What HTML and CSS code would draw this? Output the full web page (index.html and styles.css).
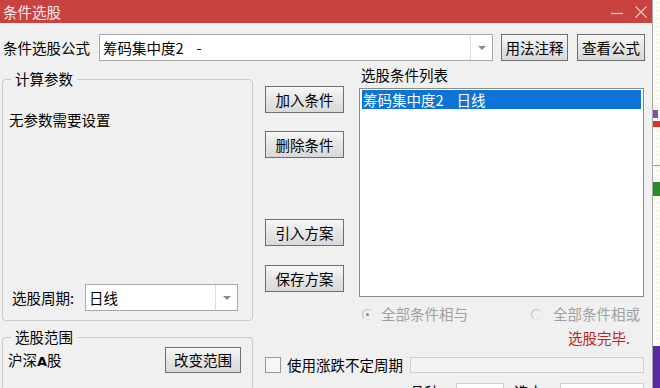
FILE: index.html
```html
<!DOCTYPE html>
<html lang="zh-CN">
<head>
<meta charset="utf-8">
<title>条件选股</title>
<link rel="stylesheet" href="styles.css">
</head>
<body>
<div class="screen">
  <div class="dialog">
    <div class="titlebar">
      <span class="title">条件选股</span>
      <svg class="tb-icon tb-min" width="14" height="14" viewBox="0 0 14 14"><path d="M1 7.5H13" stroke="#f2c4c2" stroke-width="1.3"/></svg>
      <svg class="tb-icon tb-close" width="14" height="14" viewBox="0 0 14 14"><path d="M1.5 1.5L12.5 12.5M12.5 1.5L1.5 12.5" stroke="#f2c4c2" stroke-width="1.3"/></svg>
    </div>

    <div class="formula-row">
      <span class="formula-label">条件选股公式</span>
      <div class="combo combo-formula">
        <span class="combo-text">筹码集中度2&nbsp;&nbsp;&nbsp; -</span>
        <span class="combo-arrow"><i class="tri"></i></span>
      </div>
      <button class="btn btn-usage">用法注释</button>
      <button class="btn btn-view">查看公式</button>
    </div>

    <div class="main">
      <div class="left">
        <fieldset class="group group-params">
          <legend>计算参数</legend>
          <div class="params-inner">
            <div class="no-params">无参数需要设置</div>
            <div class="period-row">
              <span class="period-label">选股周期:</span>
              <div class="combo combo-period">
                <span class="combo-text">日线</span>
                <span class="combo-arrow"><i class="tri"></i></span>
              </div>
            </div>
          </div>
        </fieldset>
        <fieldset class="group group-range">
          <legend>选股范围</legend>
          <div class="range-inner">
            <span class="range-name">沪深<b>A</b>股</span>
            <button class="btn btn-range">改变范围</button>
          </div>
        </fieldset>
      </div>

      <div class="right">
        <div class="rc-top">
          <div class="btncol">
            <button class="btn btn-side">加入条件</button>
            <button class="btn btn-side b2">删除条件</button>
            <button class="btn btn-side b3">引入方案</button>
            <button class="btn btn-side b4">保存方案</button>
          </div>
          <div class="listcol">
            <div class="list-label">选股条件列表</div>
            <div class="list">
              <div class="list-sel">筹码集中度2&nbsp;&nbsp;&nbsp; 日线</div>
            </div>
            <div class="radios">
              <span class="radio-item"><i class="radio checked"></i>全部条件相与</span>
              <span class="radio-item r2"><i class="radio"></i>全部条件相或</span>
            </div>
            <div class="done">选股完毕.</div>
          </div>
        </div>
        <div class="check-row">
          <i class="checkbox"></i>
          <span class="check-label">使用涨跌不定周期</span>
          <span class="field field-period"></span>
        </div>
        <div class="count-row">
          <span class="count-label">品种数</span>
          <span class="field field-count1"></span>
          <span class="count-label c2">选中数</span>
          <span class="field field-count2"></span>
        </div>
      </div>
    </div>
  </div>

  <div class="chart">
    <span class="mk mk-purple"></span>
    <span class="mk mk-red"></span>
    <span class="mk mk-hline"></span>
    <span class="mk mk-green"></span>
    <span class="mk mk-purple2"></span>
  </div>
</div>
</body>
</html>
```

FILE: styles.css
```css
* { box-sizing: border-box; }
html, body { margin: 0; padding: 0; }
body {
  width: 660px;
  height: 388px;
  overflow: hidden;
  font-family: "Noto Sans CJK SC", "Noto Sans", sans-serif;
  font-size: 14.5px;
  line-height: 18px;
  color: #000;
  background: #fbfbf4;
}
button { font: inherit; color: inherit; padding: 0; }

.screen { display: flex; height: 388px; }

.dialog {
  width: 653px;
  flex: none;
  background: #f0f0f0;
  border-right: 1px solid #a8a8a8;
  display: flex;
  flex-direction: column;
  overflow: hidden;
}

/* title bar */
.titlebar {
  height: 23px;
  flex: none;
  background: #c8433f;
  display: flex;
  align-items: center;
  padding-left: 3px;
  color: #fff;
}
.title { flex: 1; font-size: 14.5px; color: #fbeaea; }
.tb-icon { display: block; }
.tb-min { margin-right: 10px; margin-top: 2px; }
.tb-close { margin-right: 4px; }

/* formula row */
.formula-row {
  margin-top: 11px;
  height: 27px;
  flex: none;
  display: flex;
  align-items: center;
  padding-left: 3px;
}
.formula-label { width: 96px; }
.combo {
  height: 27px;
  background: #fff;
  border: 1px solid #a9a9a9;
  display: flex;
  align-items: stretch;
}
.combo-text { flex: 1; padding-left: 3px; display: flex; align-items: center; white-space: nowrap; }
.combo-arrow {
  width: 22px;
  border-left: 1px solid #dcdcdc;
  display: flex;
  align-items: center;
  justify-content: center;
}
.tri {
  width: 0; height: 0;
  border-left: 4px solid transparent;
  border-right: 4px solid transparent;
  border-top: 4px solid #8a8a8a;
}
.combo-formula { width: 394px; }

.btn {
  height: 27px;
  border: 1px solid #6f6f6f;
  background: linear-gradient(#f7f7f7, #e4e4e4 55%, #d9d9d9);
  display: flex;
  align-items: center;
  justify-content: center;
  white-space: nowrap;
}
.btn-usage { width: 67px; margin-left: 8px; }
.btn-view { width: 68px; margin-left: 9px; }

/* main area */
.main { display: flex; padding-left: 2px; flex: 1; }
.left { width: 251px; flex: none; }

.group {
  margin: 0;
  padding: 0;
  border: 1px solid #c9c9c9;
  border-radius: 4px;
  min-width: 0;
}
.group legend {
  margin-left: 8px;
  padding: 0 4px;
  line-height: 18px;
}
.group-params { margin-top: 9px; }
.params-inner {
  height: 232px;
  padding: 23px 0 9px 6px;
  display: flex;
  flex-direction: column;
}
.period-row { margin-top: auto; display: flex; align-items: center; }
.period-label { width: 73px; margin-left: 3px; }
.combo-period { width: 153px; }
.combo-period .combo-arrow { width: 22px; }

.group-range { margin-top: 7px; border-bottom: none; border-radius: 4px 4px 0 0; }
.range-inner {
  height: 60px;
  margin-top: 1px;
  padding: 0 11px 0 5px;
  display: flex;
  align-items: flex-start;
  justify-content: space-between;
}
.range-name { line-height: 26px; }
.range-name b { font-family: "DejaVu Sans", sans-serif; font-size: 13px; }
.btn-range { width: 76px; height: 26px; }

/* right part */
.right { width: 379px; margin-left: 12px; flex: none; }
.rc-top { display: flex; }
.btncol { width: 79px; padding-top: 25px; display: flex; flex-direction: column; }
.btn-side { width: 79px; height: 27px; }
.b2 { margin-top: 18px; }
.b3 { margin-top: 61px; }
.b4 { margin-top: 19px; }

.listcol { width: 285px; margin-left: 15px; }
.list-label { margin-top: 5px; padding-left: 2px; }
.list {
  margin-top: 4px;
  height: 209px;
  background: #fff;
  border: 1px solid #8a8a8a;
  padding: 1px 2px;
}
.list-sel {
  height: 19px;
  line-height: 19px;
  background: #0b74d6;
  color: #fff;
  padding-left: 1px;
  white-space: nowrap;
}

.radios { margin-top: 8px; height: 18px; display: flex; color: #a0a0a0; }
.radio-item { display: flex; align-items: center; }
.radio-item:first-child { padding-left: 3px; }
.r2 { margin-left: 63px; }
.radio {
  width: 11px; height: 11px;
  border-radius: 50%;
  border: 1.5px solid #bdbdbd;
  border-right-color: #ececec;
  border-bottom-color: #e4e4e4;
  margin-right: 8px;
  display: flex;
  align-items: center;
  justify-content: center;
}
.r2 .radio { margin-right: 11px; }
.radio.checked::after {
  content: "";
  width: 3px; height: 3px;
  border-radius: 50%;
  background: #8c8c8c;
}
.done { margin-top: 6px; padding-left: 209px; color: #c41f1f; }

.check-row { margin-top: 10px; height: 16px; display: flex; align-items: center; }
.checkbox {
  width: 16px; height: 16px;
  border: 1px solid #9a9a9a;
  background: #f6f6f6;
}
.check-label { margin-left: 6px; }
.field {
  display: block;
  height: 16px;
  border: 1px solid #cfcfcf;
  background: #f3f3f3;
}
.field-period { width: 234px; margin-left: auto; }

.count-row { margin-top: 10px; height: 18px; display: flex; align-items: flex-start; padding-left: 145px; }
.count-row .field { height: 18px; background: #fff; }
.field-count1 { width: 48px; margin-left: 3px; }
.c2 { margin-left: 10px; }
.field-count2 { width: 84px; margin-left: 3px; }

/* chart strip behind the dialog */
.chart {
  flex: 1;
  position: relative;
  background: #fbfbf3;
  background-image: repeating-linear-gradient(#fbfbf3 0 3px, #d8d8cc 3px 4px);
  background-size: 1px 100%;
  background-repeat: no-repeat;
  background-position: 4px 0;
}
.mk { position: absolute; left: 0; right: 0; display: block; }
.mk-purple { top: 110px; height: 8px; background: #7b4fb4; right: 2px; }
.mk-red { top: 121px; height: 6px; background: #d8322e; }
.mk-hline { top: 165px; height: 1px; background: #9a9a9a; }
.mk-green { top: 182px; height: 14px; background: #2a8a2a; }
.mk-purple2 { top: 346px; bottom: 0; background: #5b2aa0; }
```
